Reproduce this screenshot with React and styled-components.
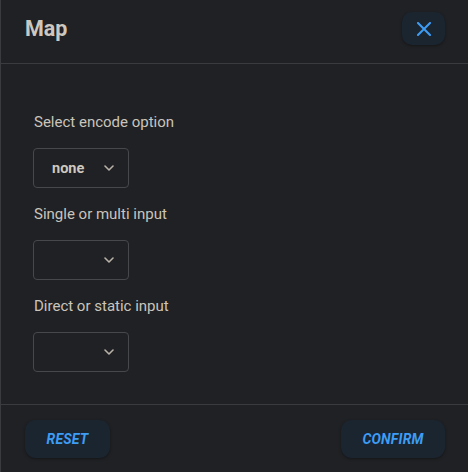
import React, { useState } from 'react';
import styled, { createGlobalStyle } from 'styled-components';

const GlobalStyle = createGlobalStyle`
  * { box-sizing: border-box; }
  html, body {
    margin: 0;
    padding: 0;
    background: #202124;
  }
  body {
    font-family: Roboto, 'Noto Sans', Arial, sans-serif;
  }
`;

const Dialog = styled.section`
  width: 468px;
  height: 472px;
  background: #202124;
  border-left: 1px solid #3a3b3e;
  display: flex;
  flex-direction: column;
`;

const Header = styled.header`
  height: 64px;
  display: flex;
  align-items: center;
  justify-content: space-between;
  padding: 0 23px 0 24px;
  border-bottom: 1px solid #3a3b3e;
`;

const Title = styled.h2`
  margin: 0;
  font-size: 21.5px;
  font-weight: 700;
  color: #cdc8bf;
  margin-top: -6px;
`;

const IconButton = styled.button`
  width: 43px;
  height: 33px;
  border: none;
  border-radius: 10px;
  background: #1b2530;
  color: #3d9df5;
  display: flex;
  align-items: center;
  justify-content: center;
  margin-top: -6px;
  box-shadow: 0 1px 3px rgba(0, 0, 0, 0.35);
  cursor: pointer;
`;

const Body = styled.div`
  flex: 1;
  padding: 49px 32px 0 32px;
  display: flex;
  flex-direction: column;
`;

const Field = styled.div`
  display: flex;
  flex-direction: column;
  margin-bottom: 17px;
`;

const Label = styled.label`
  font-size: 15px;
  color: #c9c5bd;
  margin: 0 0 17px 1px;
  line-height: 18px;
`;

const SelectBox = styled.div`
  width: 96px;
  height: 40px;
  border: 1px solid #47484b;
  border-radius: 4px;
  display: flex;
  align-items: center;
  justify-content: space-between;
  padding: 0 14px 0 18px;
  cursor: pointer;
`;

const Value = styled.span`
  font-size: 14.5px;
  font-weight: 700;
  color: #cdc8bf;
`;

const Footer = styled.footer`
  height: 68px;
  border-top: 1px solid #3a3b3e;
  display: flex;
  align-items: center;
  justify-content: space-between;
  padding: 0 23px 0 24px;
`;

const ActionButton = styled.button`
  height: 38px;
  min-width: ${(props) => props.width}px;
  border: none;
  border-radius: 11px;
  background: #1b2530;
  color: #3d9df5;
  font-family: Roboto, Arial, sans-serif;
  font-size: 14px;
  font-weight: 700;
  font-style: italic;
  letter-spacing: 0.2px;
  box-shadow: 0 1px 3px rgba(0, 0, 0, 0.35);
  cursor: pointer;
`;

const Chevron = () => (
  <svg width='10' height='6' viewBox='0 0 10 6' fill='none'>
    <path d='M1 1l4 4 4-4' stroke='#b8b2a8' strokeWidth='1.6' strokeLinecap='round' strokeLinejoin='round' />
  </svg>
);

const CloseIcon = () => (
  <svg width='14' height='14' viewBox='0 0 14 14' fill='none'>
    <path d='M1 1l12 12M13 1L1 13' stroke='currentColor' strokeWidth='2' strokeLinecap='square' />
  </svg>
);

// one dropdown row
const Select = ({ label, value }) => (
  <Field>
    <Label>{label}</Label>
    <SelectBox>
      <Value>{value}</Value>
      <Chevron />
    </SelectBox>
  </Field>
);

const App = () => {
  const [encode] = useState('none');

  return (
    <>
      <GlobalStyle />
      <Dialog>
        <Header>
          <Title>Map</Title>
          <IconButton aria-label='close'>
            <CloseIcon />
          </IconButton>
        </Header>
        <Body>
          <Select label='Select encode option' value={encode} />
          <Select label='Single or multi input' value='' />
          <Select label='Direct or static input' value='' />
        </Body>
        <Footer>
          <ActionButton width={85}>RESET</ActionButton>
          <ActionButton width={104}>CONFIRM</ActionButton>
        </Footer>
      </Dialog>
    </>
  );
};

export default App;
